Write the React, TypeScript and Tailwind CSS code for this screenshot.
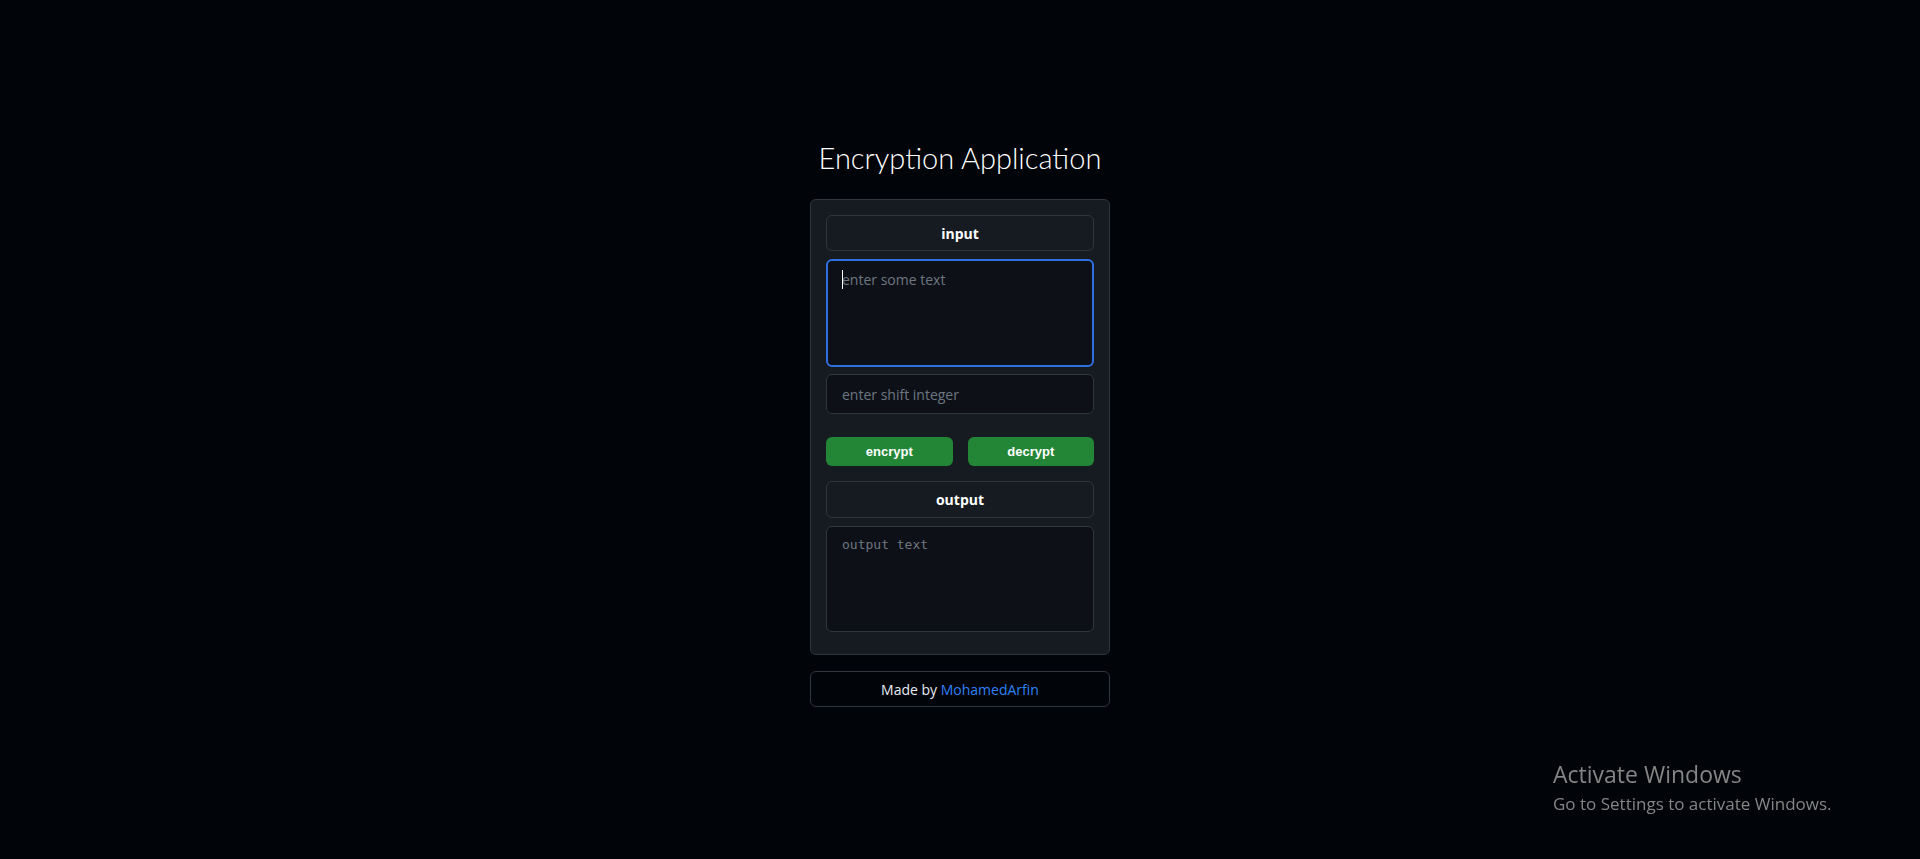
import { useState } from "react";

const box = "w-full flex items-center justify-center border border-[#30363d] rounded-md bg-[#161b22]";

const App = () => {
  const [text, setText] = useState("");
  const [shift, setShift] = useState("");
  const [output, setOutput] = useState("");

  const run = (dir: number) => {
    const n = (parseInt(shift) || 0) * dir;
    const res = text.replace(/[a-z]/gi, (c) => {
      const base = c <= "Z" ? 65 : 97;
      return String.fromCharCode(((((c.charCodeAt(0) - base + n) % 26) + 26) % 26) + base);
    });
    setOutput(res);
  };

  return (
    <div className="min-h-screen bg-[#010409] flex flex-col items-center pt-[138px] font-['Open_Sans',sans-serif]">
      <h1 className="text-[29px] leading-[39px] font-light text-white font-['Lato',sans-serif] mb-[22px]">
        Encryption Application
      </h1>

      <section className="w-[300px] border border-[#30363d] rounded-md bg-[#161b22] px-[15px] pt-[15px] pb-[22px] flex flex-col">
        <div className={`${box} h-9`}>
          <span className="text-[14px] font-bold text-white">input</span>
        </div>

        <div className="relative mt-2">
          <textarea
            value={text}
            onChange={(e) => setText(e.target.value)}
            placeholder="enter some text"
            className="block w-full h-[108px] resize-none border-2 border-[#2f6fe0] rounded-md bg-[#0d1117] px-[14px] pt-[9px] text-[14px] leading-[20px] text-[#e6edf3] placeholder:text-[#6e7681] outline-none"
          />
          {/* caret */}
          <div className="absolute left-[16px] top-[11px] w-px h-[19px] bg-white"></div>
        </div>

        <input
          value={shift}
          onChange={(e) => setShift(e.target.value)}
          placeholder="enter shift integer"
          className="mt-[7px] w-full h-10 border border-[#30363d] rounded-md bg-[#0d1117] px-[15px] text-[14px] text-[#e6edf3] placeholder:text-[#6e7681] outline-none"
        />

        <div className="flex gap-[15px] mt-[23px]">
          <button
            onClick={() => run(1)}
            className="flex-1 h-[29px] rounded-md bg-[#238636] text-white text-[13px] font-bold font-['Liberation_Sans',sans-serif]"
          >
            encrypt
          </button>
          <button
            onClick={() => run(-1)}
            className="flex-1 h-[29px] rounded-md bg-[#238636] text-white text-[13px] font-bold font-['Liberation_Sans',sans-serif]"
          >
            decrypt
          </button>
        </div>

        <div className={`${box} h-[37px] mt-[15px]`}>
          <span className="text-[14px] font-bold text-white">output</span>
        </div>

        <textarea
          readOnly
          value={output}
          placeholder="output text"
          className="mt-2 block w-full h-[106px] resize-none border border-[#30363d] rounded-md bg-[#0d1117] px-[15px] pt-[9px] text-[13px] leading-[18px] font-['DejaVu_Sans_Mono',monospace] text-[#e6edf3] placeholder:text-[#6e7681] outline-none"
        />
      </section>

      <footer className="mt-4 w-[300px] h-9 border border-[#30363d] rounded-md bg-[#010409] flex items-center justify-center text-[14px] text-[#e6edf3]">
        <span>
          Made by <a href="#" className="text-[#2f81f7]">MohamedArfin</a>
        </span>
      </footer>

      {/* windows watermark */}
      <div className="fixed left-[1553px] top-[758px] text-[#858585] font-['Open_Sans',sans-serif] pointer-events-none">
        <p className="text-[23px] leading-[32px]">Activate Windows</p>
        <p className="text-[17px] leading-[28px]">Go to Settings to activate Windows.</p>
      </div>
    </div>
  );
};

export default App;
